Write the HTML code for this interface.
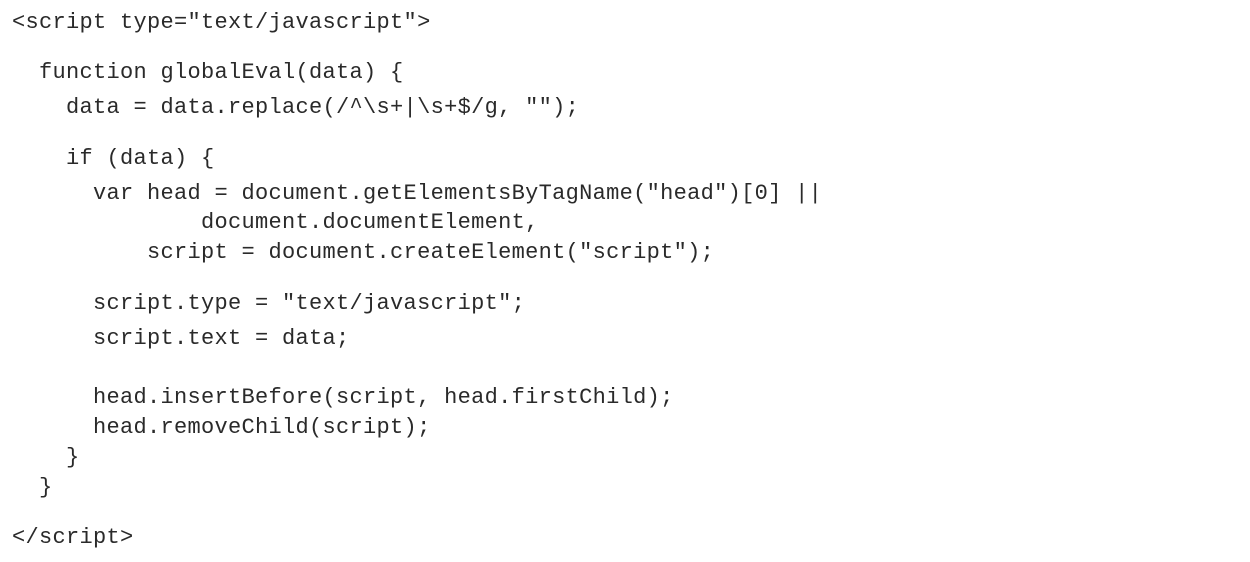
<!DOCTYPE html>
<html><head><meta charset="utf-8"><style>
html,body{margin:0;padding:0;background:#fff;width:1250px;height:562px;overflow:hidden}
pre{position:absolute;left:12px;margin:0;font-family:"Liberation Mono",monospace;font-size:22px;letter-spacing:0.3px;color:#2a2a2a;line-height:30px;white-space:pre}
</style></head><body>
<pre style="top:8px">&lt;script type="text/javascript"&gt;</pre>
<pre style="top:58px">  function globalEval(data) {</pre>
<pre style="top:93px">    data = data.replace(/^\s+|\s+$/g, "");</pre>
<pre style="top:144px">    if (data) {</pre>
<pre style="top:179px">      var head = document.getElementsByTagName("head")[0] ||</pre>
<pre style="top:208px">              document.documentElement,</pre>
<pre style="top:238px">          script = document.createElement("script");</pre>
<pre style="top:289px">      script.type = "text/javascript";</pre>
<pre style="top:324px">      script.text = data;</pre>
<pre style="top:383px">      head.insertBefore(script, head.firstChild);</pre>
<pre style="top:413px">      head.removeChild(script);</pre>
<pre style="top:443px">    }</pre>
<pre style="top:473px">  }</pre>
<pre style="top:523px">&lt;/script&gt;</pre>
</body></html>
